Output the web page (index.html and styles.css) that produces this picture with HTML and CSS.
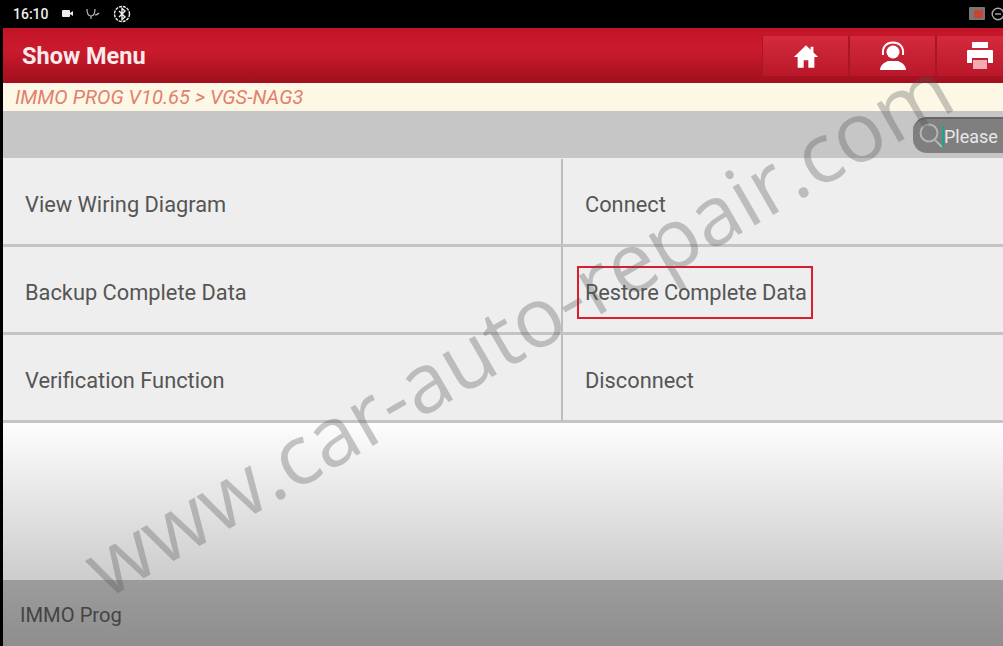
FILE: index.html
```html
<!DOCTYPE html>
<html lang="en">
<head>
  <meta charset="UTF-8" />
  <title>Show Menu</title>
  <link rel="stylesheet" href="styles.css">
</head>
<body>
  <div class="status">
    <div class="status-left">
      <span class="clock">16:10</span>
      <svg class="st-icon" width="12" height="10" viewBox="0 0 12 10"><rect x="0" y="1" width="8" height="7" rx="1" fill="#eee"/><path d="M8 4l3-2v5L8 5z" fill="#eee"/></svg>
      <svg class="st-icon" width="16" height="14" viewBox="0 0 16 14" fill="none" stroke="#bbb" stroke-width="1.2"><path d="M2 2c0 5 1 7 4 7s4-2 4-7"/><path d="M6 9v3M10 8c2 0 3-1 4-2"/></svg>
      <svg class="st-icon" width="20" height="20" viewBox="0 0 20 20" fill="none" stroke="#eee" stroke-width="1.4"><circle cx="10" cy="10" r="7.5" stroke-dasharray="3 1"/><path d="M7 7l6 6-3 2.5V4.5l3 2.5-6 6"/></svg>
    </div>
    <div class="status-right">
      <svg width="16" height="14" viewBox="0 0 16 14"><rect width="16" height="13" rx="1" fill="#777"/><rect x="5" y="3" width="9" height="8" fill="#c8452f"/></svg>
      <svg width="14" height="14" viewBox="0 0 14 14" fill="none" stroke="#aaa" stroke-width="1.4"><circle cx="7" cy="7" r="5.8"/><path d="M4 7h6"/></svg>
    </div>
  </div>

  <div class="app">
    <header class="topbar">
      <h1>Show Menu</h1>
      <nav class="tools">
        <button class="tool">
          <svg width="26" height="25" viewBox="0 0 28 26"><path d="M14 1L1 13.5h4V25h6.5v-8h5v8H23V13.500h4L22 8.700V2.500h-3v3.300z" fill="#fff"/></svg>
        </button>
        <button class="tool">
          <svg width="30" height="30" viewBox="0 0 30 30"><path d="M2 29c0-5 5-8 8-9h10c3 1 8 4 8 9z" fill="#fff"/><circle cx="15" cy="11" r="6.500" fill="#fff"/><path d="M5 14C4 5 9 1.500 15 1.500S26 5 25 14" fill="none" stroke="#fff" stroke-width="2"/></svg>
        </button>
        <button class="tool">
          <svg width="30" height="30" viewBox="0 0 30 30"><rect x="7" y="1" width="16" height="6" fill="#fff"/><path d="M3 9h24a1 1 0 0 1 1 1v12h-5v-5H7v5H2V10a1 1 0 0 1 1-1z" fill="#fff"/><rect x="8" y="19" width="14" height="9" fill="#f5a9b0"/></svg>
        </button>
      </nav>
    </header>

    <div class="crumb">IMMO PROG V10.65 &gt; VGS-NAG3</div>

    <div class="searchbar">
      <div class="search">
        <svg width="26" height="28" viewBox="0 0 26 28" fill="none" stroke="#b5b5b5" stroke-width="2"><circle cx="11" cy="11" r="8.500"/><path d="M17 18l7 7"/></svg>
        <span class="caret"></span>
        <span>Please</span>
      </div>
    </div>

    <div class="menu">
      <div class="item">View Wiring Diagram</div>
      <div class="item">Connect</div>
      <div class="item">Backup Complete Data</div>
      <div class="item"><span class="marked">Restore Complete Data</span></div>
      <div class="item">Verification Function</div>
      <div class="item">Disconnect</div>
    </div>

    <div class="spacer"></div>

    <footer class="foot">IMMO Prog</footer>
  </div>

  <div class="watermark">www.car-auto-repair.com</div>
</body>
</html>
```

FILE: styles.css
```css
html, body {
  margin: 0;
  height: 646px;
  overflow: hidden;
}

body {
  display: flex;
  flex-direction: column;
  position: relative;
  width: 1003px;
  font-family: Roboto, "Liberation Sans", sans-serif;
  background-color: #000;
}

.status {
  height: 28px;
  flex: none;
  display: flex;
  justify-content: space-between;
  align-items: center;
  color: #eee;
}

.status-left {
  display: flex;
  align-items: center;
  padding-left: 13px;
  gap: 11px;
}

.clock {
  font-size: 14px;
  font-weight: 500;
  margin-right: 2px;
}

.status-right {
  display: flex;
  align-items: center;
  gap: 6px;
  margin-right: -2px;
}

.status-right svg {
  flex: none;
}

.app {
  flex: 1;
  margin-left: 3px;
  display: flex;
  flex-direction: column;
  min-height: 0;
}

.topbar {
  height: 55px;
  flex: none;
  display: flex;
  justify-content: space-between;
  background: linear-gradient(#c21428 0%, #cb1a2e 40%, #a0101d 100%);
}

.topbar h1 {
  margin: 0;
  padding-left: 19px;
  font-size: 23.500px;
  font-weight: 700;
  line-height: 57px;
  color: #fbeaea;
}

.tools {
  display: flex;
  padding-top: 8px;
  height: 40px;
  margin-right: -20px;
}

.tool {
  width: 87px;
  height: 40px;
  padding: 0;
  border: none;
  border-left: 1px solid #a81524;
  border-right: 1px solid #a81524;
  background: linear-gradient(#d42a3e, #b9182a);
  display: flex;
  align-items: center;
  justify-content: center;
}

.crumb {
  height: 28px;
  flex: none;
  padding-left: 12px;
  background-color: #fdf8e6;
  color: #e2806e;
  font-size: 20.100px;
  font-style: italic;
  line-height: 29px;
}

.searchbar {
  height: 47px;
  flex: none;
  background-color: #c6c6c6;
  position: relative;
}

.search {
  position: absolute;
  left: 910px;
  top: 6px;
  width: 110px;
  height: 36px;
  box-sizing: border-box;
  border-radius: 14px;
  border-top: 2px solid #666;
  background-color: #7f7f7f;
  display: flex;
  align-items: center;
  padding-left: 5px;
  color: #e8e8e8;
  font-size: 18px;
}

.caret {
  width: 2px;
  height: 21px;
  flex: none;
  background-color: #1fa58c;
  margin-left: -2px;
}

.menu {
  display: grid;
  grid-template-columns: 558px 1fr;
  flex: none;
  padding-top: 1px;
  background-color: #eeeeee;
}

.item {
  height: 88px;
  box-sizing: border-box;
  display: flex;
  align-items: center;
  padding: 5px 0 0 22px;
  background-color: #eeeeee;
  border-bottom: 3px solid #c4c4c4;
  color: #555;
  font-size: 21.800px;
}

.item:nth-child(even) {
  border-left: 2px solid #bdbdbd;
  padding-left: 22px;
}

.marked {
  position: relative;
  letter-spacing: -0.1px;
}

.marked::after {
  content: "";
  position: absolute;
  left: -8px;
  right: -6px;
  top: -14px;
  bottom: -14px;
  border: 2px solid #d81f30;
}

.spacer {
  flex: 1;
  background: linear-gradient(#fdfdfd, #cccccc);
}

.foot {
  height: 66px;
  flex: none;
  box-sizing: border-box;
  padding: 23px 0 0 17px;
  background: linear-gradient(#9c9c9c, #8e8e8e);
  color: #444;
  font-size: 20.200px;
}

.watermark {
  position: absolute;
  left: 24px;
  top: 269px;
  white-space: nowrap;
  font-family: "Open Sans", sans-serif;
  font-size: 83px;
  color: rgba(85, 85, 85, 0.32);
  transform: rotate(-30deg);
  pointer-events: none;
}
```
